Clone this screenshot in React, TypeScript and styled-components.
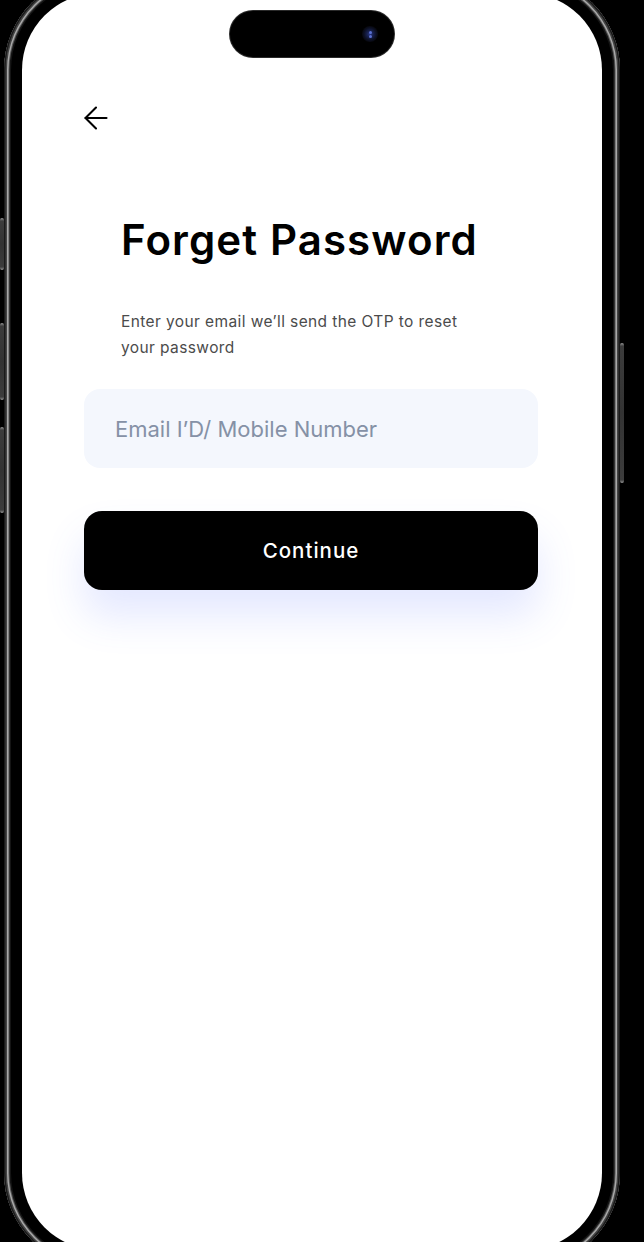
import React from "react";
import styled, { createGlobalStyle } from "styled-components";
import { ArrowLeft } from "lucide-react";

const GlobalStyle = createGlobalStyle`
  html, body {
    margin: 0;
    padding: 0;
    background: #000;
    overflow: hidden;
  }
  * { box-sizing: border-box; }
`;

const Stage = styled.div`
  width: 644px;
  height: 1242px;
  overflow: hidden;
  background: #000;
  position: relative;
`;

const Frame = styled.div`
  position: relative;
  margin: -25px 0 0 4px;
  width: 616px;
  height: 1293px;
  border-radius: 95px;
  padding: 7px;
  background: #1e1e1e;
  box-shadow:
    inset 0 0 0 1.5px #1a1a1a,
    inset 0 0 0 3px #444,
    inset 0 0 0 4.5px #a8a8a8,
    inset 0 0 0 5.5px #555,
    inset 0 0 0 7px #151515;
`;

const SideButton = styled.div<{ $side: "left" | "right"; $top: number; $height: number }>`
  position: absolute;
  ${(p) => (p.$side === "left" ? "left: -4px;" : "right: -4px;")}
  top: ${(p) => p.$top}px;
  width: 4px;
  height: ${(p) => p.$height}px;
  border-radius: 2px;
  background: linear-gradient(180deg, #9a9a9a 0px, #3c3c3c 3px, #333 50%, #3c3c3c calc(100% - 3px), #9a9a9a 100%);
`;

const Bezel = styled.div`
  height: 100%;
  border-radius: 88px;
  padding: 11px;
  background: #000;
`;

const Screen = styled.div`
  position: relative;
  height: 100%;
  border-radius: 77px;
  background: #fff;
  overflow: hidden;
  font-family: Inter, "Noto Sans", sans-serif;
`;

const Island = styled.div`
  position: absolute;
  left: 208px;
  top: 18px;
  width: 164px;
  height: 46px;
  border-radius: 23px;
  background: #000;
  box-shadow: 0 0 0 1px #2a2a2a;
  display: flex;
  align-items: center;
  justify-content: flex-end;
  padding-right: 16px;
`;

const Camera = styled.div`
  width: 16px;
  height: 16px;
  border-radius: 50%;
  background: radial-gradient(circle at 50% 50%, #2a3a8a 0, #18214f 3px, #0c1024 6px, #07080f 8px);
  display: flex;
  flex-direction: column;
  align-items: center;
  justify-content: center;
  gap: 1px;
`;

const Lens = styled.span`
  width: 3px;
  height: 3px;
  border-radius: 50%;
  background: #5a6fd0;
`;

const Content = styled.div`
  display: flex;
  flex-direction: column;
  padding: 107px 64px 0 62px;
`;

const BackButton = styled.button`
  width: 36px;
  height: 36px;
  margin-left: -6px;
  padding: 0;
  border: none;
  background: transparent;
  color: #000;
  display: flex;
  cursor: pointer;
`;

const Title = styled.h1`
  margin: 83px 0 0 37px;
  font-size: 42px;
  line-height: 41px;
  font-weight: 600;
  color: #000;
  letter-spacing: 1.1px;
`;

const Subtitle = styled.p`
  margin: 49px 0 0 37px;
  max-width: 360px;
  font-size: 15.5px;
  line-height: 26px;
  font-weight: 400;
  color: #4b4b4b;
  letter-spacing: 0.4px;
`;

const Field = styled.input`
  margin-top: 28px;
  height: 79px;
  width: 100%;
  border: none;
  outline: none;
  border-radius: 16px;
  background: #f4f7fd;
  padding: 0 0 0 31px;
  font-family: Inter, "Noto Sans", sans-serif;
  font-size: 22px;
  color: #1a1a1a;
  &::placeholder {
    color: #8591a6;
  }
`;

const PrimaryButton = styled.button`
  margin-top: 43px;
  height: 79px;
  width: 100%;
  border: none;
  border-radius: 18px;
  background: #000;
  color: #fff;
  font-family: Inter, "Noto Sans", sans-serif;
  font-size: 20.5px;
  font-weight: 500;
  letter-spacing: 1px;
  box-shadow: 0 26px 40px rgba(90, 110, 255, 0.16);
  cursor: pointer;
`;

export default function App() {
  return (
    <>
      <GlobalStyle />
      <Stage>
        <Frame>
          <SideButton $side="left" $top={243} $height={52} />
          <SideButton $side="left" $top={348} $height={77} />
          <SideButton $side="left" $top={452} $height={86} />
          <SideButton $side="right" $top={368} $height={140} />
          <Bezel>
            <Screen>
              <Island>
                <Camera>
                  <Lens />
                  <Lens />
                </Camera>
              </Island>
              <Content>
                <BackButton aria-label="Back">
                  <ArrowLeft size={36} strokeWidth={1.4} />
                </BackButton>
                <Title>Forget Password</Title>
                <Subtitle>Enter your email we’ll send the OTP to reset your password</Subtitle>
                <Field placeholder="Email I’D/ Mobile Number" />
                <PrimaryButton>Continue</PrimaryButton>
              </Content>
            </Screen>
          </Bezel>
        </Frame>
      </Stage>
    </>
  );
}
